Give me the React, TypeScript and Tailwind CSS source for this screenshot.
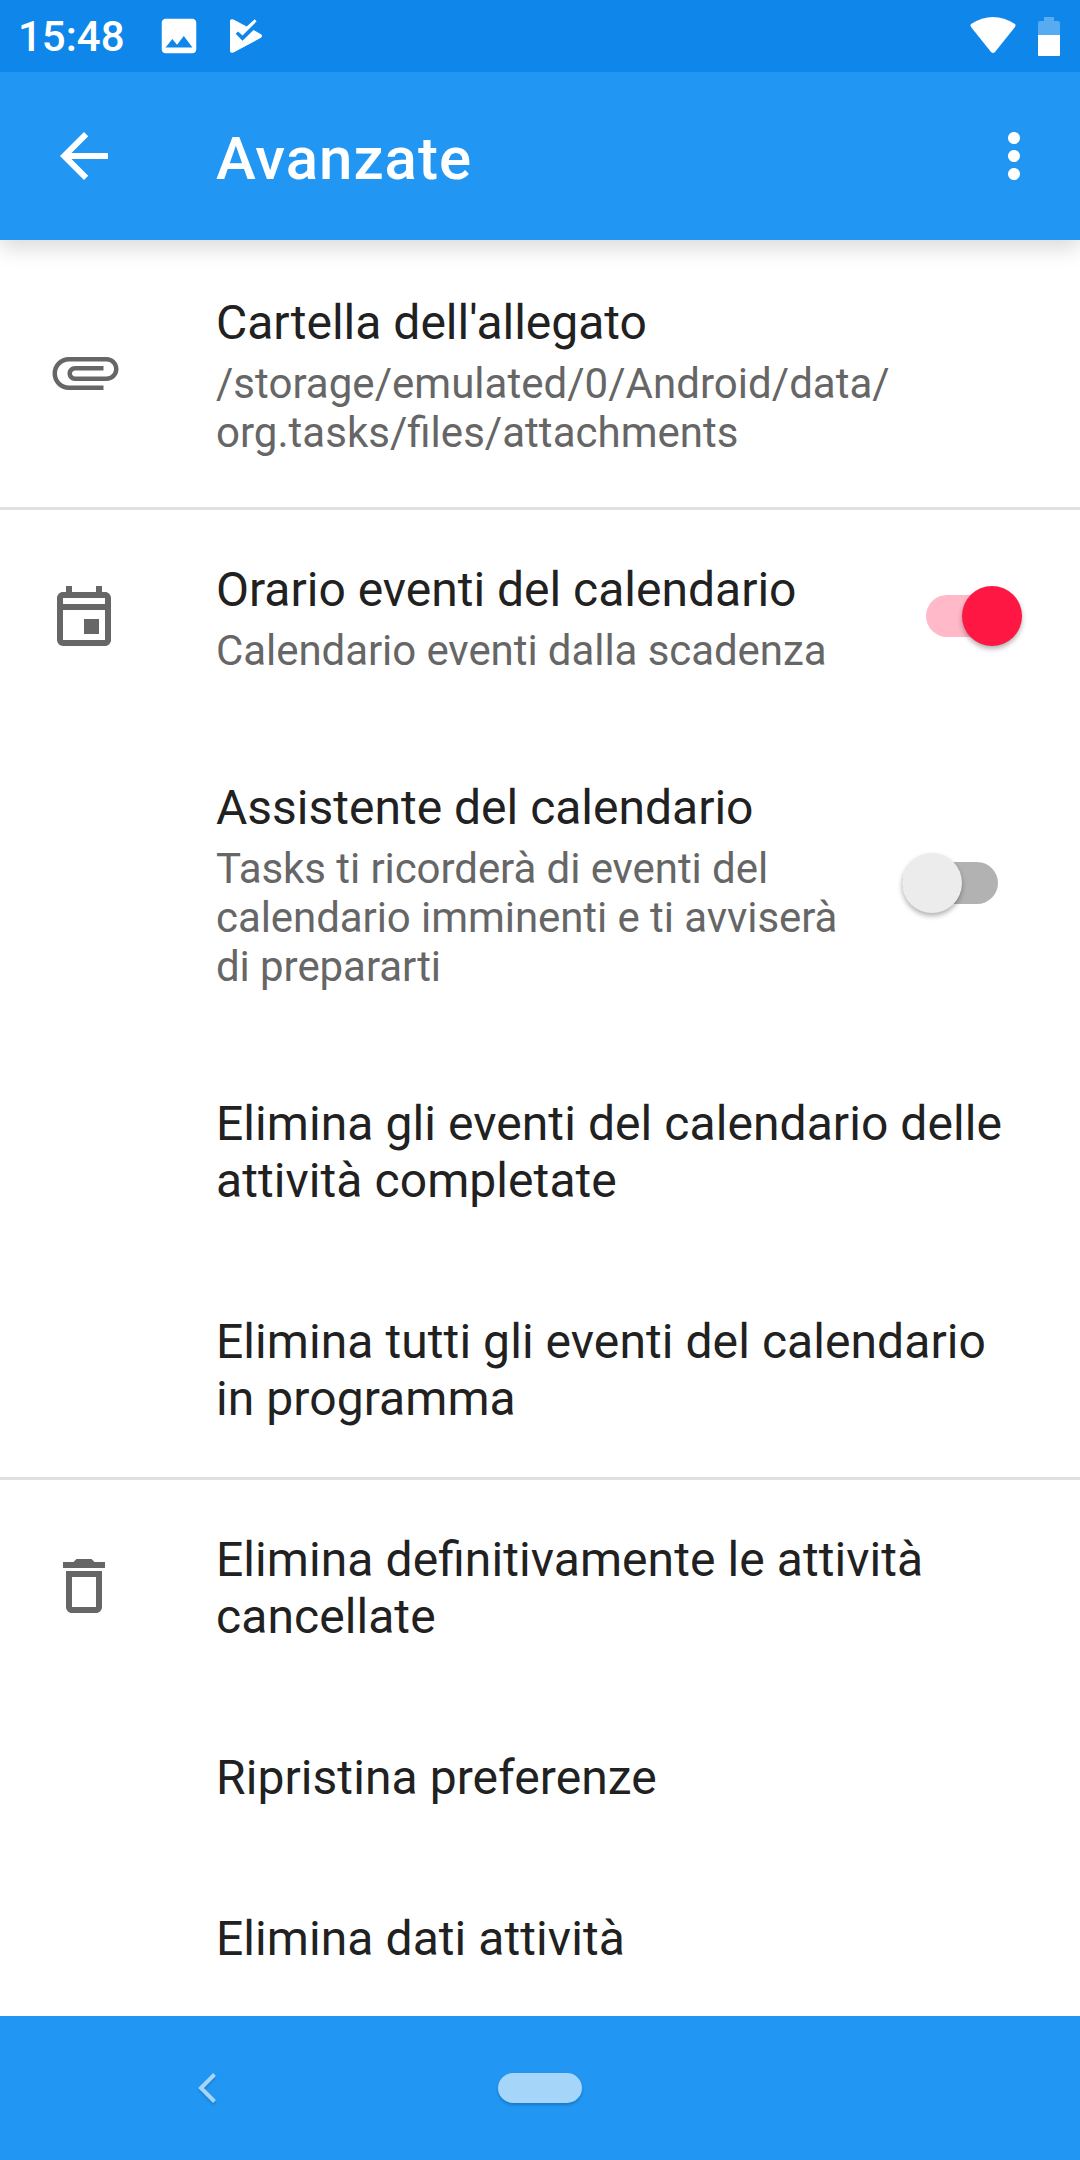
import React from "react";

type IconProps = { className?: string; children: React.ReactNode };

function Icon({ className = "", children }: IconProps) {
  return (
    <svg viewBox="0 0 24 24" className={`size-[72px] shrink-0 fill-current ${className}`}>
      {children}
    </svg>
  );
}

const PaperclipIcon = () => (
  <Icon className="-translate-y-0.5 translate-x-[1.5px]">
    <path
      transform="matrix(0 1 -1 0 24 0)"
      d="M16.5 6v11.5c0 2.21-1.79 4-4 4s-4-1.79-4-4V5c0-1.38 1.12-2.5 2.5-2.5s2.5 1.12 2.5 2.5v10.5c0 .55-.45 1-1 1s-1-.45-1-1V6H10v9.5c0 1.38 1.12 2.5 2.5 2.5s2.5-1.12 2.5-2.5V5c0-2.21-1.79-4-4-4S7 2.79 7 5v12.5c0 3.04 2.46 5.5 5.5 5.5s5.5-2.46 5.5-5.5V6h-1.5z"
    />
  </Icon>
);

const CalendarIcon = () => (
  <Icon>
    <path d="M19 4h-1V2h-2v2H8V2H6v2H5c-1.11 0-1.99.9-1.99 2L3 20a2 2 0 0 0 2 2h14c1.1 0 2-.9 2-2V6c0-1.1-.9-2-2-2zm0 16H5V10h14v10zm0-12H5V6h14v2zm-7 5h5v5h-5z" />
  </Icon>
);

const TrashIcon = () => (
  <Icon>
    <path d="M6 19c0 1.1.9 2 2 2h8c1.1 0 2-.9 2-2V7H6v12zM8 9h8v10H8V9zm7.5-5l-1-1h-5l-1 1H5v2h14V4z" />
  </Icon>
);

function Toggle({ on = false }: { on?: boolean }) {
  return (
    <div
      role="switch"
      aria-checked={on}
      className={`flex h-[42px] w-24 shrink-0 items-center rounded-full ${
        on ? "mr-[58px] justify-end bg-[#ffb9c8]" : "mr-[82px] justify-start bg-[#b2b2b2]"
      }`}
    >
      <div
        className={`size-[60px] shrink-0 rounded-full shadow-[0_3px_5px_rgba(0,0,0,0.3)] ${
          on ? "bg-[#ff1744]" : "bg-[#ececec]"
        }`}
      />
    </div>
  );
}

type RowProps = {
  icon?: React.ReactNode;
  title: string[];
  summary?: string[];
  toggle?: React.ReactNode;
  divided?: boolean;
};

function Row({ icon, title, summary, toggle, divided }: RowProps) {
  return (
    <div className={`flex items-center ${divided ? "shadow-[inset_0_3px_0_#e0e0e0]" : ""}`}>
      <div className="flex w-[216px] shrink-0 pl-12 text-[#666666]">{icon}</div>
      <div className="flex-1 pt-[54px] pb-[50px] whitespace-nowrap [font-feature-settings:'liga']">
        <div
          className={`text-[48px] leading-[57px] text-[#212121] ${
            summary ? "" : "tracking-[0.075px]"
          }`}
        >
          {title.map((line) => (
            <div key={line}>{line}</div>
          ))}
        </div>
        {summary && (
          <div
            className={`mt-2 text-[42px] leading-[49px] text-[#666666] ${
              toggle ? "tracking-[-0.07px]" : "tracking-[0.03px]"
            }`}
          >
            {summary.map((line) => (
              <div key={line}>{line}</div>
            ))}
          </div>
        )}
      </div>
      {toggle}
    </div>
  );
}

export default function App() {
  return (
    <div className="flex h-[2160px] w-[1080px] flex-col overflow-hidden bg-white font-[Roboto,sans-serif]">
      <header className="z-10 shrink-0 bg-[#2196f3] text-white shadow-[0_8px_20px_rgba(0,0,0,0.15)]">
        <div className="flex h-[72px] items-center bg-[#0f87ea] pl-[18px]">
          <span className="w-[106px] pt-0.5 text-[42px] leading-[72px] font-medium">15:48</span>
          <svg viewBox="0 0 24 24" className="ml-8 size-[46px] fill-current">
            <path d="M21 19V5c0-1.100-.9-2-2-2H5c-1.100 0-2 .9-2 2v14c0 1.100.9 2 2 2h14c1.100 0 2-.9 2-2zM8.500 13.500l2.500 3.010L14.500 12l4.500 6H5l3.500-4.500z" />
          </svg>
          <svg viewBox="0 0 32 34" className="ml-7 h-[34px] w-8 fill-current">
            <path d="M0 1.500Q1-.5 3.500 .5L16.700 7.500L24.700 .3L26.600 2.300L12.500 16.500L8 12.500L5.700 14.700L12.500 21.700L23.500 11L31 15.300Q33 17 31 18.700L3.500 33.500Q1 34.500 0 32.500Z" />
          </svg>
          <div className="flex-1" />
          <svg viewBox="0 0 46 36" className="h-9 w-[46px] -translate-y-px fill-current">
            <path d="M1 7Q23-7 45 7Q46 8 45 10L25 35Q23 37 21 35L1 10Q0 8 1 7Z" />
          </svg>
          <svg viewBox="0 0 22 39" className="mr-5 ml-[22px] h-[39px] w-[22px] fill-current">
            <path d="M6 0h10v4h4q2 0 2 2v12H0V6q0-2 2-2h4z" fillOpacity=".3" />
            <path d="M0 18h22v20q0 1-1 1H1q-1 0-1-1z" />
          </svg>
        </div>
        <div className="flex h-[168px] items-center px-12 pr-[30px]">
          <Icon>
            <path d="M20 11H7.830l5.590-5.590L12 4l-8 8 8 8 1.410-1.410L7.830 13H20v-2z" />
          </Icon>
          <h1 className="ml-24 flex-1 pt-[5px] text-[60px] leading-[72px] font-medium tracking-[1px]">
            Avanzate
          </h1>
          <Icon>
            <path d="M12 8c1.100 0 2-.9 2-2s-.9-2-2-2-2 .9-2 2 .9 2 2 2zm0 2c-1.100 0-2 .9-2 2s.9 2 2 2 2-.9 2-2-.9-2-2-2zm0 6c-1.100 0-2 .9-2 2s.9 2 2 2 2-.9 2-2-.9-2-2-2z" />
          </Icon>
        </div>
      </header>

      <main className="flex-1 overflow-hidden">
        <Row
          icon={<PaperclipIcon />}
          title={["Cartella dell'allegato"]}
          summary={["/storage/emulated/0/Android/data/", "org.tasks/files/attachments"]}
        />
        <Row
          divided
          icon={<CalendarIcon />}
          title={["Orario eventi del calendario"]}
          summary={["Calendario eventi dalla scadenza"]}
          toggle={<Toggle on />}
        />
        <Row
          title={["Assistente del calendario"]}
          summary={["Tasks ti ricorderà di eventi del", "calendario imminenti e ti avviserà", "di prepararti"]}
          toggle={<Toggle />}
        />
        <Row title={["Elimina gli eventi del calendario delle", "attività completate"]} />
        <Row title={["Elimina tutti gli eventi del calendario", "in programma"]} />
        <Row divided icon={<TrashIcon />} title={["Elimina definitivamente le attività", "cancellate"]} />
        <Row title={["Ripristina preferenze"]} />
        <Row title={["Elimina dati attività"]} />
      </main>

      <nav className="flex h-36 shrink-0 items-center bg-[#2196f3]">
        <svg
          viewBox="0 0 18 30"
          className="ml-[198px] h-[30px] w-[18px] overflow-visible fill-none stroke-[#a6d5fa] stroke-4 drop-shadow-[0_2px_1px_rgba(0,0,0,0.15)]"
        >
          <path d="M16.500 1.500L3 15l13.500 13.500" />
        </svg>
        <div className="ml-[282px] h-[30px] w-[84px] rounded-full bg-[#a6d5fa] shadow-[0_2px_3px_rgba(0,0,0,0.2)]" />
      </nav>
    </div>
  );
}
